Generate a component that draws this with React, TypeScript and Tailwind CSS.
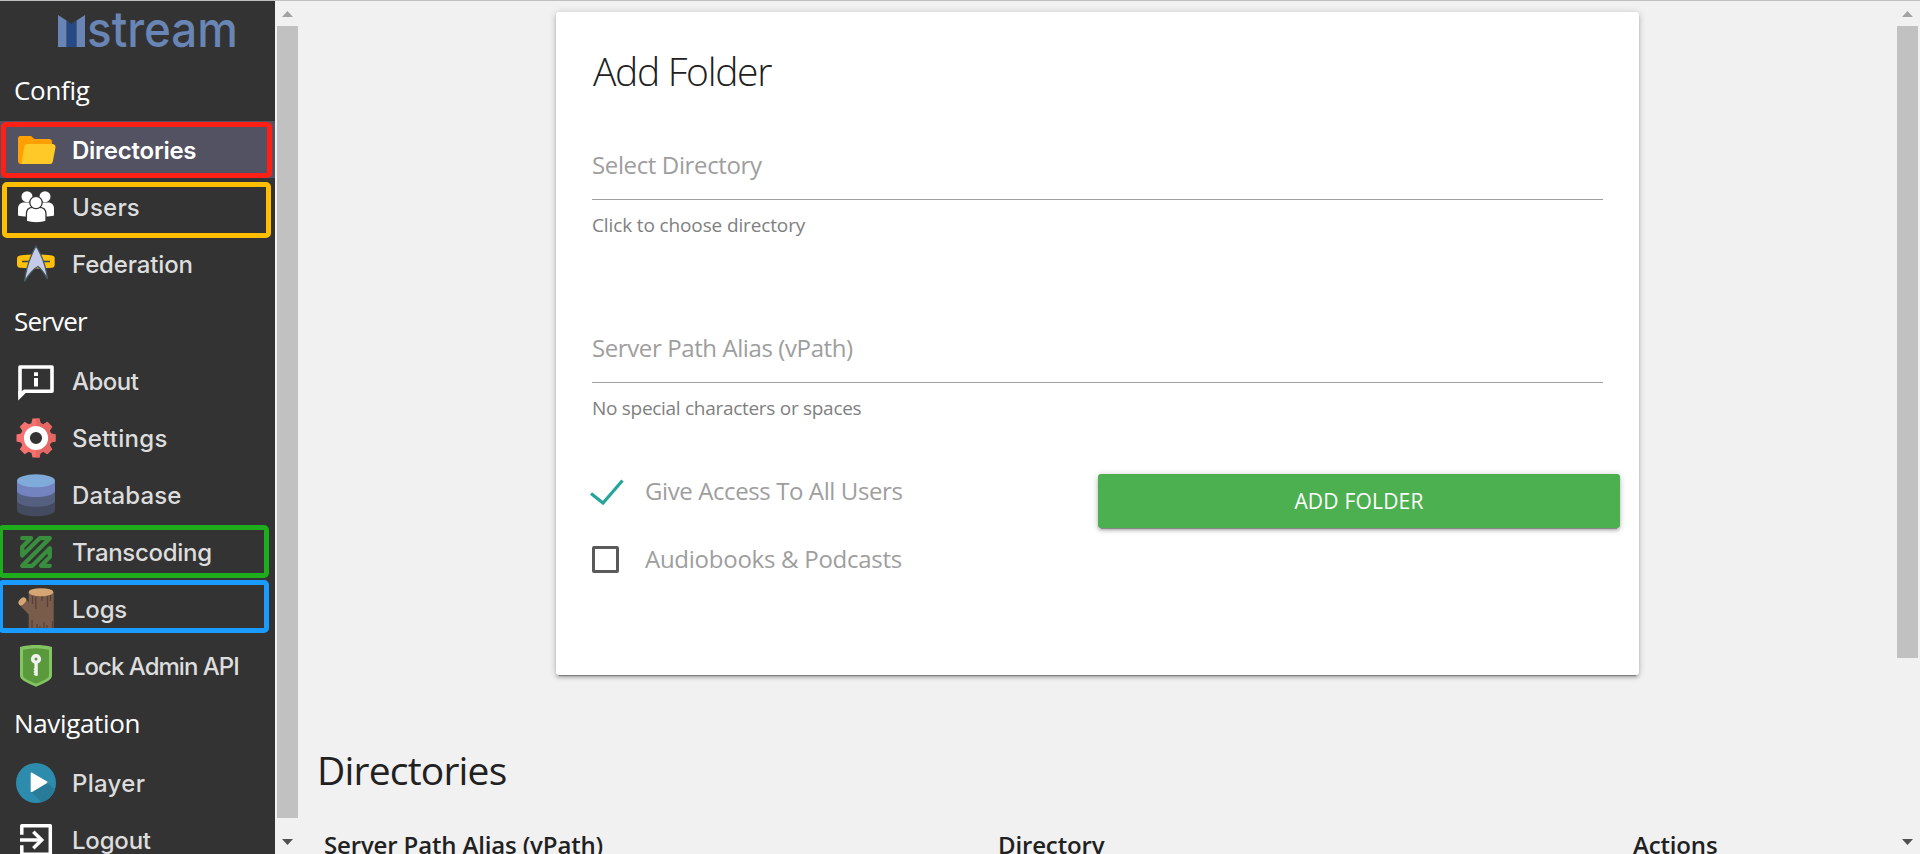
import type { ReactNode } from "react";

function Glyph({ children }: { children: ReactNode }) {
  return (
    <svg viewBox="0 0 40 40" className="h-10 w-10 shrink-0 overflow-visible">
      {children}
    </svg>
  );
}

const FolderIcon = () => (
  <Glyph>
    <path fill="#ffa000" d="M4.500 6H15l3.500 3H33a3 3 0 0 1 3 3v6L8 34H5a3 3 0 0 1-3-3V8.500A2.500 2.500 0 0 1 4.500 6z" />
    <path fill="#ffca28" d="M11.300 14H36.500a3 3 0 0 1 3 3.500L36.800 31.500a3 3 0 0 1-3 2.500H5.500L8.400 16.500A3 3 0 0 1 11.300 14z" />
  </Glyph>
);

const UsersIcon = () => (
  <Glyph>
    <g fill="#fff">
      <circle cx="11" cy="9.700" r="5.500" />
      <circle cx="29" cy="9.700" r="5.500" />
      <path d="M2 28.500V22c0-4 2-6.500 6-6.500h6c3 0 6 2 6 6v7.500c-6 1-14 .8-18-.5z" />
      <path d="M38 28.500V22c0-4-2-6.500-6-6.500h-6c-3 0-6 2-6 6v7.500c6 1 14 .8 18-.5z" />
      <path stroke="#333" strokeWidth="1.300" d="M10.400 34.300V27c0-4.500 3-6.600 6.600-6.600h6c4 0 7 2.100 7 6.600v7.300c-5 2-14 2-19.600 0z" />
      <circle cx="20" cy="15.500" r="6.200" stroke="#333" strokeWidth="1.300" />
    </g>
  </Glyph>
);

const FederationIcon = () => (
  <Glyph>
    <path fill="#ffc107" d="M4 11.500c10-1.300 22-1.300 32 0 2 .3 2.700 1.500 2.700 3v6c0 2-1 3-2.700 3.300-10 1-22 1-32 0-2-.300-3-1.300-3-3.300v-6c0-1.500 1-2.700 3-3z" />
    <path stroke="#37474f" strokeWidth="1.600" d="M6 17.500h28" />
    <path fill="#c5cae9" stroke="#455a64" strokeWidth="1.300" d="M20 2C15 11 10 24 8.500 37.500 13 30 17 25 22 22.500c4 3 7 8 9.500 12.500C30 22 25 10 20 2z" />
  </Glyph>
);

const AboutIcon = () => (
  <Glyph>
    <path fill="none" stroke="#fff" strokeWidth="3.600" strokeLinejoin="round" d="M4 34.500V6h32v24.200H8.300z" />
    <path fill="#fff" d="M2.200 30v9.600l8-8zM18 11.200h4v3.800h-4zM18 17h4v8.400h-4z" />
  </Glyph>
);

const teeth = [0, 45, 90, 135, 180, 225, 270, 315];
const Gear = ({ color }: { color: string }) => (
  <g fill={color}>
    <circle cx="20" cy="20" r="15.500" />
    {teeth.map((a) => (
      <path key={a} transform={`rotate(${a} 20 20)`} d="M15 7l1.500-6.500h7L25 7z" />
    ))}
  </g>
);
const SettingsIcon = () => (
  <Glyph>
    <clipPath id="gear-right">
      <path d="M20-2h22v44H20z" />
    </clipPath>
    <Gear color="#f6716f" />
    <g clipPath="url(#gear-right)">
      <Gear color="#e56763" />
    </g>
    <circle cx="20" cy="20" r="9.100" fill="#333" stroke="#fff" strokeWidth="6" />
  </Glyph>
);

const DatabaseIcon = () => (
  <Glyph>
    <path fill="#444b60" d="M1 25v10c0 3.600 8.500 6.300 19 6.300S39 38.600 39 35V25z" />
    <path fill="#556080" d="M1 16v9.500c0 3.600 8.500 6.300 19 6.300s19-2.700 19-6.300V16z" />
    <path fill="#7383bf" d="M1 5.800v10c0 3.600 8.500 6.300 19 6.300s19-2.700 19-6.300v-10z" />
    <ellipse cx="20" cy="5.800" rx="19" ry="6.500" fill="#7fabda" />
  </Glyph>
);

const TranscodingIcon = () => (
  <Glyph>
    <path
      fill="none"
      stroke="#388e3c"
      strokeWidth="4.300"
      strokeLinecap="round"
      strokeLinejoin="round"
      d="M6.200 6.200H15L6.200 15V23.500L23.700 6.200H33.800L6.200 33.800H16.300L33.800 16.300V25L25 33.800H33.800"
    />
  </Glyph>
);

const LogsIcon = () => (
  <Glyph>
    <path fill="#795c4a" d="M3 15.500L12.700 25.500V40h25V3h-25v10.500L9.500 9z" />
    <path stroke="#57403a" strokeWidth="1.300" d="M16.500 7v8M19.800 8v12M26 7v5M31.500 7v11M34.500 6v6M16 31v9M21 35v5M24 37v3M28 33v7M31 36v4M36.500 32v7" />
    <ellipse cx="25" cy="3.200" rx="12.300" ry="4" fill="#d6a574" />
    <ellipse cx="6.300" cy="12.300" rx="4.600" ry="2.900" transform="rotate(-48 6.300 12.300)" fill="#d6a574" />
  </Glyph>
);

const LockIcon = () => (
  <Glyph>
    <path fill="#83c463" d="M4 1c10.500-2.600 21.500-2.600 32 0v28c0 4-2.500 6-16 11.800C6.500 35 4 33 4 29z" />
    <path fill="#5b9a3c" d="M7 3.800c8.500-2 17.500-2 26 0v25c0 2.800-2 4.500-13 9-11-4.500-13-6.200-13-9z" />
    <circle cx="20" cy="13" r="3.300" fill="none" stroke="#f1f1f1" strokeWidth="3.600" />
    <path fill="#f1f1f1" d="M18.400 16.500h3.400v13.200h-2.400l-1.800-1 1-1.500-1.200-1.200 1.200-1.400-1.200-1.300 1-1z" />
  </Glyph>
);

const PlayerIcon = () => (
  <Glyph>
    <circle cx="20" cy="20" r="20" fill="#2d8bad" />
    <path fill="#287c99" d="M15 29l16.300-9.500 7.800 7.200A20 20 0 0 1 25.500 39.200z" />
    <path fill="#fff" d="M14.700 10.500c0-.8.700-1.100 1.400-.7l15 8.800c.5.300.5 1 0 1.300l-15 9c-.700.400-1.400 0-1.400-.7z" />
  </Glyph>
);

const LogoutIcon = () => (
  <Glyph>
    <path fill="none" stroke="#fff" strokeWidth="3.500" strokeLinejoin="round" d="M5.800 14.800V5.800h28.500v28.500H5.800v-9M4 20h21.500" />
    <path fill="none" stroke="#fff" strokeWidth="3.500" d="M17.300 11.700l8.400 8.300-8.400 8.300" />
  </Glyph>
);

const Logo = () => (
  <svg viewBox="0 0 275 60" className="h-[60px] w-[275px] shrink-0">
    <path fill="#6885b5" d="M58 14l8.500 5.500V46H58zM85 14l-8.500 5.500V46H85z" />
    <path fill="#264a86" d="M67 19.500l4.500 3.500 4.500-3.500V46h-9z" />
    <text x="87" y="45.800" textLength="151" lengthAdjust="spacingAndGlyphs" className="fill-[#6885b5] font-['Inter'] text-[50px] font-medium">
      stream
    </text>
  </svg>
);

function Heading({ text, spacing }: { text: string; spacing: string }) {
  return (
    <h2 className={`flex h-[60px] shrink-0 items-center pb-[2px] pl-[14px] font-['Open_Sans',sans-serif] text-[26px] text-white ${spacing}`}>
      {text}
    </h2>
  );
}

interface ItemProps {
  icon: ReactNode;
  text: string;
  spacing: string;
  active?: boolean;
  mark?: string;
}

function Item({ icon, text, spacing, active, mark }: ItemProps) {
  return (
    <a className={`relative flex h-[57px] shrink-0 items-center pt-px pl-4 ${active ? "bg-[#525262]" : ""}`}>
      {icon}
      <span className={`pt-[2px] pl-4 font-['Inter',sans-serif] text-[24px] leading-8 whitespace-nowrap ${spacing} ${active ? "font-semibold text-white" : "font-medium text-[#dddddd]"}`}>
        {text}
      </span>
      {mark && <span className={`absolute rounded-[5px] border-[5px] ${mark}`} />}
    </a>
  );
}

function Scrollbar({ thumb }: { thumb: string }) {
  return (
    <div className="flex w-[25px] shrink-0 flex-col items-center bg-[#f1f1f1]">
      <svg viewBox="0 0 11 6" className="mt-[10px] mb-[9px] h-[6px] w-[11px] shrink-0">
        <path fill="#a3a3a3" d="M5.500 0L11 6H0z" />
      </svg>
      <div className={`w-[21px] shrink-0 bg-[#c1c1c1] ${thumb}`} />
      <svg viewBox="0 0 11 6" className="mt-auto mb-[9px] h-[6px] w-[11px] shrink-0">
        <path fill="#505050" d="M0 0h11L5.500 6z" />
      </svg>
    </div>
  );
}

function Field({ label, hint, labelSpacing, hintSpacing }: { label: string; hint: string; labelSpacing: string; hintSpacing: string }) {
  return (
    <div className="flex flex-col">
      <label className={`h-9 text-[24px] leading-9 text-[#9e9e9e] ${labelSpacing}`}>{label}</label>
      <div className="mt-4 h-px bg-[#9e9e9e]" />
      <span className={`mt-[13px] h-6 text-[19px] leading-6 text-[#808080] ${hintSpacing}`}>{hint}</span>
    </div>
  );
}

export default function App() {
  return (
    <div className="flex h-[854px] w-[1920px] overflow-hidden border-t border-[#c0c0c0] bg-[#f1f1f1] font-['Open_Sans',sans-serif]">
      <nav className="flex w-[275px] shrink-0 flex-col overflow-hidden bg-[#333333]">
        <Logo />
        <Heading text="Config" spacing="tracking-[-0.3px]" />
        <Item active icon={<FolderIcon />} text="Directories" spacing="tracking-[-0.25px]" mark="top-px left-px h-14 w-[271px] border-[#ff2015]" />
        <Item icon={<UsersIcon />} text="Users" spacing="tracking-[0.2px]" mark="top-1 left-[2px] h-14 w-[269px] border-[#ffbf00]" />
        <Item icon={<FederationIcon />} text="Federation" spacing="tracking-[-0.15px]" />
        <Heading text="Server" spacing="tracking-[-0.8px]" />
        <Item icon={<AboutIcon />} text="About" spacing="tracking-[-0.5px]" />
        <Item icon={<SettingsIcon />} text="Settings" spacing="tracking-[0.25px]" />
        <Item icon={<DatabaseIcon />} text="Database" spacing="tracking-[0.1px]" />
        <Item icon={<TranscodingIcon />} text="Transcoding" spacing="tracking-[-0.3px]" mark="top-[2px] -left-[2px] h-[53px] w-[271px] border-[#1fae1b]" />
        <Item icon={<LogsIcon />} text="Logs" spacing="tracking-[-0.2px]" mark="top-0 -left-[2px] h-[53px] w-[271px] border-[#1a9bff]" />
        <Item icon={<LockIcon />} text="Lock Admin API" spacing="tracking-[-0.98px]" />
        <Heading text="Navigation" spacing="tracking-[-0.35px]" />
        <Item icon={<PlayerIcon />} text="Player" spacing="tracking-[0.3px]" />
        <Item icon={<LogoutIcon />} text="Logout" spacing="tracking-[-0.2px]" />
      </nav>
      <Scrollbar thumb="h-[792px]" />

      <main className="flex min-w-0 flex-1 flex-col pt-[11px]">
        <section className="ml-[256px] flex h-[663px] w-[1083px] shrink-0 flex-col rounded-[3px] bg-white pt-[29px] pl-9 shadow-[0_3px_3px_0_rgba(0,0,0,0.14),0_4px_1px_-3px_rgba(0,0,0,0.3),0_1px_7px_0_rgba(0,0,0,0.22)]">
          <h1 className="h-[60px] pl-px text-[39px] leading-[60px] font-light tracking-[-1.3px] text-[#212121]">Add Folder</h1>
          <div className="mt-[46px] flex w-[1011px] flex-col gap-[93px]">
            <Field label="Select Directory" hint="Click to choose directory" labelSpacing="tracking-[-0.37px]" hintSpacing="tracking-[-0.13px]" />
            <Field label="Server Path Alias (vPath)" hint="No special characters or spaces" labelSpacing="tracking-[-0.4px]" hintSpacing="tracking-[-0.29px]" />
          </div>
          <div className="mt-[53px] mr-[19px] flex items-start justify-between">
            <div className="flex flex-col gap-8 text-[24px] leading-9 text-[#9e9e9e]">
              <label className="flex items-center tracking-[-0.4px]">
                <svg viewBox="0 0 36 36" className="-ml-1 h-9 w-[36px]">
                  <path fill="none" stroke="#26a69a" strokeWidth="3.200" d="M3 20.500l12 9.500L34.500 7.500" />
                </svg>
                <span className="pl-[21px]">Give Access To All Users</span>
              </label>
              <label className="flex items-center tracking-[-0.26px]">
                <span className="h-[27px] w-[27px] rounded-[2px] border-[3px] border-[#5a5a5a]" />
                <span className="pl-[26px]">Audiobooks &amp; Podcasts</span>
              </label>
            </div>
            <button className="mt-px h-[54px] w-[522px] rounded-[3px] bg-[#4caf50] text-[21px] leading-8 tracking-[0.2px] text-white shadow-[0_3px_3px_0_rgba(0,0,0,0.14),0_4px_1px_-3px_rgba(0,0,0,0.3),0_1px_7px_0_rgba(0,0,0,0.22)]">
              ADD FOLDER
            </button>
          </div>
        </section>
        <h2 className="mt-[65px] h-[60px] shrink-0 pl-[17px] text-[39px] leading-[60px] tracking-[-0.8px] text-[#212121]">Directories</h2>
        <div className="mt-[27px] grid h-9 shrink-0 grid-cols-[674px_635px_1fr] pl-6 text-[24px] leading-9 font-semibold tracking-[-0.15px] text-[#212121]">
          <span>Server Path Alias (vPath)</span>
          <span>Directory</span>
          <span>Actions</span>
        </div>
      </main>
      <Scrollbar thumb="h-[632px]" />
    </div>
  );
}
